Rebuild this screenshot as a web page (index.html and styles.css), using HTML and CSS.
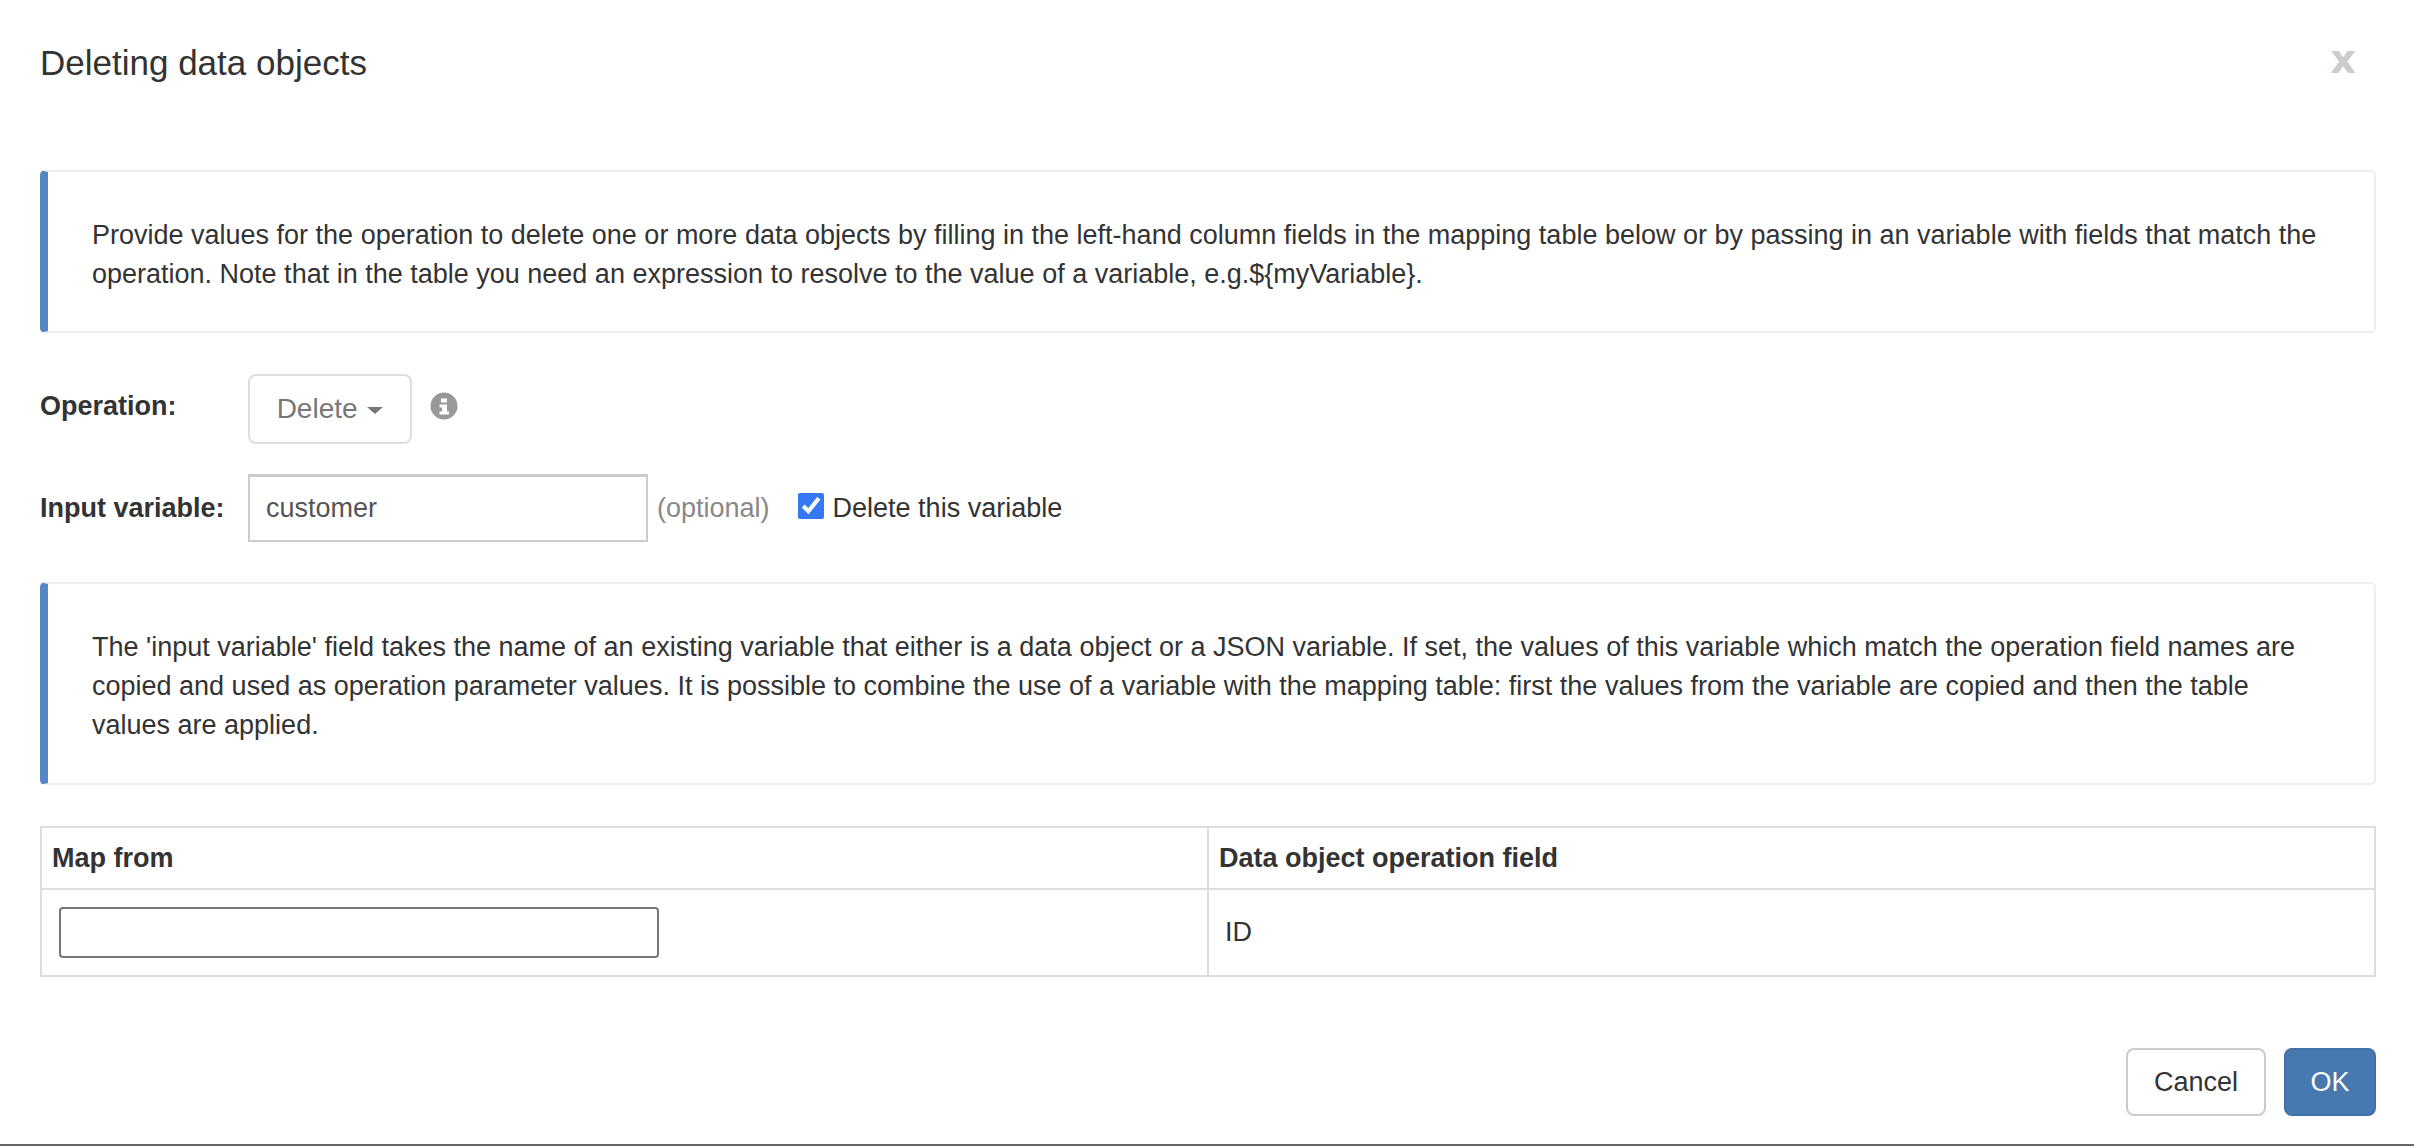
FILE: index.html
```html
<!DOCTYPE html>
<html lang="en">
<head>
   <meta charset="UTF-8">
   <title>Deleting data objects</title>
   <link rel="stylesheet" href="styles.css">
</head>
<body>
   <div class="modal">
      <div class="modal-header">
         <h4 class="modal-title">Deleting data objects</h4>
         <span class="close">x</span>
      </div>

      <div class="callout callout-first">
         Provide values for the operation to delete one or more data objects by filling in the left-hand column fields in the mapping table below or by passing in an variable with fields that match the operation. Note that in the table you need an expression to resolve to the value of a variable, e.g.${myVariable}.
      </div>

      <div class="form-row row-operation">
         <label class="form-label">Operation:</label>
         <button class="btn-select">Delete <span class="caret"></span></button>
         <svg class="info-icon" viewBox="0 0 28 28" width="28" height="28">
            <circle cx="14" cy="14" r="13.5" fill="#999"/>
            <path d="M11 6.5h6v4h-6z M9.5 12.5h7.5v7h2v3h-9.500v-3h2.500v-4h-2.500z" fill="#fff"/>
         </svg>
      </div>

      <div class="form-row row-variable">
         <label class="form-label">Input variable:</label>
         <input class="text-input" type="text" value="customer">
         <span class="hint">(optional)</span>
         <label class="check-label"><input class="check" type="checkbox" checked>Delete this variable</label>
      </div>

      <div class="callout callout-second">
         The 'input variable' field takes the name of an existing variable that either is a data object or a JSON variable. If set, the values of this variable which match the operation field names are copied and used as operation parameter values. It is possible to combine the use of a variable with the mapping table: first the values from the variable are copied and then the table values are applied.
      </div>

      <table class="map-table">
         <thead>
            <tr>
               <th>Map from</th>
               <th>Data object operation field</th>
            </tr>
         </thead>
         <tbody>
            <tr>
               <td class="cell-input"><input class="map-input" type="text"></td>
               <td class="cell-field">ID</td>
            </tr>
         </tbody>
      </table>

      <div class="modal-footer">
         <button class="btn btn-default">Cancel</button>
         <button class="btn btn-primary">OK</button>
      </div>
   </div>
   <div class="page-edge"></div>
</body>
</html>
```

FILE: styles.css
```css
* {
   box-sizing: border-box;
}

body {
   margin: 0;
   height: 1146px;
   overflow: hidden;
   display: flex;
   flex-direction: column;
   background-color: #fff;
   color: #333;
   font-family: "Liberation Sans", Arial, sans-serif;
   font-size: 27px;
}

.modal {
   flex: 1;
   padding: 0 38px 0 40px;
}

.modal-header {
   display: flex;
   justify-content: space-between;
   height: 170px;
   padding-top: 43px;
}

.modal-title {
   margin: 0;
   font-size: 35px;
   font-weight: 400;
   line-height: 40px;
}

.close {
   margin-top: -8px;
   margin-right: 20px;
   color: #ccc;
   font-family: "DejaVu Sans", sans-serif;
   font-size: 40px;
   font-weight: 700;
   line-height: 48px;
}

.callout {
   padding: 44px 40px 0 44px;
   border: 2px solid #eee;
   border-left: 8px solid #5587c4;
   border-radius: 5px;
   line-height: 39px;
}

.callout-first {
   height: 163px;
}

.callout-second {
   height: 203px;
   margin-top: 40px;
}

.form-row {
   display: flex;
   align-items: center;
}

.row-operation {
   height: 70px;
   margin-top: 41px;
}

.row-variable {
   height: 68px;
   margin-top: 30px;
}

.form-label {
   width: 208px;
   font-weight: 700;
}

.row-operation .form-label {
   margin-top: -6px;
}

.btn-select {
   height: 70px;
   width: 164px;
   padding: 0;
   border: 2px solid #ddd;
   border-radius: 8px;
   background: #fff;
   color: #777;
   font-family: inherit;
   font-size: 28px;
}

.caret {
   display: inline-block;
   margin-left: 2px;
   vertical-align: middle;
   border-top: 7px solid #777;
   border-left: 8px solid transparent;
   border-right: 8px solid transparent;
}

.info-icon {
   margin-left: 18px;
   margin-top: -6px;
}

.text-input {
   width: 400px;
   height: 68px;
   padding: 0 16px;
   border: 2px solid #ccc;
   border-top-width: 3px;
   border-radius: 0;
   color: #555;
   font-family: inherit;
   font-size: 27px;
}

.hint {
   margin-left: 9px;
   color: #888;
}

.check-label {
   display: flex;
   align-items: center;
   margin-left: 28px;
}

.check {
   width: 26px;
   height: 26px;
   margin: -4px 9px 0 0;
   accent-color: #3478f6;
}

.map-table {
   width: 100%;
   margin-top: 41px;
   table-layout: fixed;
   border-collapse: collapse;
}

.map-table th,
.map-table td {
   border: 2px solid #ddd;
   text-align: left;
}

.map-table th {
   height: 62px;
   padding: 0 10px;
   font-weight: 700;
}

.map-table td {
   height: 87px;
}

.cell-input {
   padding: 0 0 0 17px;
}

.cell-field {
   padding: 0 16px;
}

.map-input {
   display: block;
   width: 600px;
   height: 51px;
   border: 2px solid #767676;
   border-radius: 4px;
   background: #fff;
}

.modal-footer {
   display: flex;
   justify-content: flex-end;
   gap: 18px;
   margin-top: 71px;
}

.btn {
   height: 68px;
   border-radius: 8px;
   font-family: inherit;
   font-size: 27px;
}

.btn-default {
   width: 140px;
   border: 2px solid #ccc;
   background: #fff;
   color: #333;
}

.btn-primary {
   width: 92px;
   border: 2px solid #3f71a8;
   background: #4878b0;
   color: #fff;
}

.page-edge {
   height: 2px;
   background: #666;
}
```
